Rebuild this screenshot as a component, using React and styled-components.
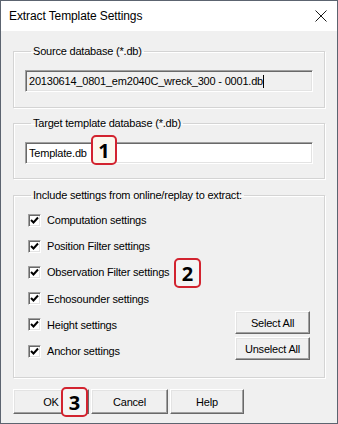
import React from "react";
import styled, { createGlobalStyle } from "styled-components";

const GlobalStyle = createGlobalStyle`
  html, body {
    margin: 0;
    padding: 0;
    background: #f0f0f0;
  }
  * {
    box-sizing: border-box;
  }
`;

const settings = [
  "Computation settings",
  "Position Filter settings",
  "Observation Filter settings",
  "Echosounder settings",
  "Height settings",
  "Anchor settings",
];

const CheckMark = () => (
  <svg width="9" height="9" viewBox="0 0 9 9">
    <path d="M1 4 L3.5 6.5 L8 1.5" fill="none" stroke="#000" strokeWidth="2" />
  </svg>
);

const CloseIcon = () => (
  <svg width="12" height="12" viewBox="0 0 12 12">
    <path d="M0.5 0.5 L11.5 11.5 M11.5 0.5 L0.5 11.5" stroke="#1a1a1a" strokeWidth="1" />
  </svg>
);

const App = () => {
  return (
    <Window>
      <GlobalStyle />
      <TitleBar>
        <Title>Extract Template Settings</Title>
        <CloseIcon />
      </TitleBar>
      <Body>
        <Group $pt={12} $pb={15}>
          <Legend>Source database (*.db)</Legend>
          <TextBox $readOnly>
            20130614_0801_em2040C_wreck_300 - 0001.db
            <Caret />
          </TextBox>
        </Group>
        <Group $mt={9} $pt={12} $pb={14}>
          <Legend>Target template database (*.db)</Legend>
          <FieldWrap>
            <TextBox>Template.db</TextBox>
            <Badge $left={66} $top={-7} $w={26} $bg="#fbf8ee">1</Badge>
          </FieldWrap>
        </Group>
        <Group $mt={10} $pt={0} $pb={13}>
          <Legend>Include settings from online/replay to extract:</Legend>
          <SettingsGrid>
            <CheckList>
              {settings.map((name) => (
                <CheckRow key={name}>
                  <CheckBox>
                    <CheckMark />
                  </CheckBox>
                  <CheckLabel>{name}</CheckLabel>
                  {name === "Observation Filter settings" && (
                    <Badge $left={149} $top={-1}>2</Badge>
                  )}
                </CheckRow>
              ))}
            </CheckList>
            <SideButtons>
              <Button $w={75} $h={23}>Select All</Button>
              <Button $w={75} $h={23}>Unselect All</Button>
            </SideButtons>
          </SettingsGrid>
        </Group>
        <ButtonRow>
          <Button $w={76} $h={25}>
            OK
            <Badge $left={47} $top={-3}>3</Badge>
          </Button>
          <Button $w={77} $h={25}>Cancel</Button>
          <Button $w={74} $h={25}>Help</Button>
        </ButtonRow>
      </Body>
    </Window>
  );
};

export default App;

const Window = styled.div`
  width: 338px;
  height: 424px;
  border: 1px solid #5c6470;
  background: #f0f0f0;
  display: flex;
  flex-direction: column;
  font-family: "Liberation Sans", Arial, sans-serif;
  font-size: 11px;
  letter-spacing: -0.2px;
  color: #000;
`;

const TitleBar = styled.div`
  height: 30px;
  background: #fff;
  display: flex;
  align-items: center;
  justify-content: space-between;
  padding: 0 10px 0 8px;
`;

const Title = styled.span`
  font-family: "Liberation Sans", Arial, sans-serif;
  font-size: 12px;
  letter-spacing: -0.1px;
  color: #000;
`;

const Body = styled.div`
  flex: 1;
  padding: 14px 12px 0 12px;
  display: flex;
  flex-direction: column;
`;

const Group = styled.fieldset`
  margin: ${(p) => p.$mt || 0}px 0 0 0;
  padding: ${(p) => p.$pt}px 11px ${(p) => p.$pb}px 11px;
  border: 1px solid #d4d4d4;
  box-shadow: inset 1px 1px 0 #fff, 1px 1px 0 #fff;
  min-width: 0;
`;

const Legend = styled.legend`
  margin-left: 6px;
  padding: 0 2px;
  line-height: 13px;
  height: 13px;
`;

const FieldWrap = styled.div`
  position: relative;
`;

const TextBox = styled.div`
  height: 22px;
  width: 288px;
  padding: 0 3px;
  display: flex;
  align-items: center;
  white-space: nowrap;
  background: ${(p) => (p.$readOnly ? "#f0f0f0" : "#fff")};
  border-style: solid;
  border-width: 1px;
  border-color: #a0a0a0 #fff #fff #a0a0a0;
  box-shadow: inset 1px 1px 0 #696969, inset -1px -1px 0 #e3e3e3;
`;

const Caret = styled.span`
  display: inline-block;
  width: 1px;
  height: 13px;
  background: #000;
`;

const SettingsGrid = styled.div`
  display: flex;
  justify-content: space-between;
  align-items: flex-end;
  padding-top: 5px;
`;

const CheckList = styled.div`
  display: flex;
  flex-direction: column;
`;

const CheckRow = styled.div`
  position: relative;
  height: 26.2px;
  display: flex;
  align-items: center;
  gap: 6px;
  padding-left: 3px;
`;

const CheckBox = styled.span`
  width: 13px;
  height: 13px;
  display: flex;
  align-items: center;
  justify-content: center;
  background: #fff;
  border-style: solid;
  border-width: 1px;
  border-color: #a0a0a0 #fff #fff #a0a0a0;
  box-shadow: inset 1px 1px 0 #696969, inset -1px -1px 0 #e3e3e3;
`;

const CheckLabel = styled.span`
  white-space: nowrap;
`;

const SideButtons = styled.div`
  display: flex;
  flex-direction: column;
  gap: 3px;
  margin-bottom: 4px;
  margin-right: 3px;
`;

const Button = styled.button`
  position: relative;
  width: ${(p) => p.$w}px;
  height: ${(p) => p.$h}px;
  padding: 0;
  font-family: "Liberation Sans", Arial, sans-serif;
  font-size: 11px;
  letter-spacing: -0.2px;
  color: #000;
  background: #f0f0f0;
  border-style: solid;
  border-width: 1px;
  border-color: #fff #696969 #696969 #fff;
  box-shadow: inset -1px -1px 0 #a0a0a0, inset 1px 1px 0 #e3e3e3;
`;

const ButtonRow = styled.div`
  display: flex;
  gap: 2px;
  margin-top: 11px;
`;

const Badge = styled.span`
  position: absolute;
  left: ${(p) => p.$left}px;
  top: ${(p) => p.$top}px;
  width: ${(p) => p.$w || 27}px;
  height: 30px;
  display: flex;
  align-items: center;
  justify-content: center;
  border: 2px solid #d2232f;
  border-radius: 5px;
  background: ${(p) => p.$bg || "#f4f4f4"};
  font-family: "Open Sans", "Noto Sans", sans-serif;
  font-weight: 700;
  font-size: 20px;
  letter-spacing: 0;
  color: #000;
`;
